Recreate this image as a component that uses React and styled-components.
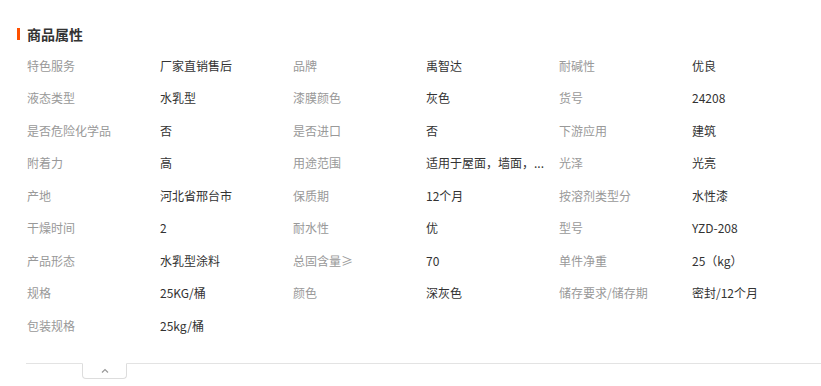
import styled, { createGlobalStyle } from 'styled-components';

const GlobalStyle = createGlobalStyle`
    body {
        margin: 0;
        background: #fff;
        font-family: "Microsoft YaHei", "Noto Sans CJK SC", "Liberation Sans", sans-serif;
    }
`

const Page = styled.div`
    padding: 24px 0 0 17px;
`

const Title = styled.h2`
    display: flex;
    align-items: center;
    margin: 0;
    height: 20px;
    font-size: 14px;
    font-weight: bold;
    color: #333;
    &::before {
        content: '';
        width: 3px;
        height: 12px;
        background: #ff5000;
        margin-right: 7px;
    }
`

const Grid = styled.div`
    display: grid;
    grid-template-columns: repeat(6, 133px);
    grid-auto-rows: 32.5px;
    margin: 4.75px 0 0 10px;
    font-size: 12px;
`

const Cell = styled.div`
    display: flex;
    align-items: center;
    color: ${p => (p.$label ? '#999' : '#333')};
    white-space: nowrap;
`

const Footer = styled.div`
    margin: 22px 0 0 9px;
    border-top: 1px solid #e3e3e3;
    height: 23px;
    padding-left: 56px;
`

const Toggle = styled.button`
    display: flex;
    align-items: center;
    justify-content: center;
    width: 45px;
    height: 16px;
    margin-top: -1px;
    padding: 0 0 2px;
    border: 1px solid #ddd;
    border-top: 1px solid #fff;
    border-radius: 0 0 4px 4px;
    background: #fff;
`

const props = [
    ['特色服务', '厂家直销售后', '品牌', '禹智达', '耐碱性', '优良'],
    ['液态类型', '水乳型', '漆膜颜色', '灰色', '货号', '24208'],
    ['是否危险化学品', '否', '是否进口', '否', '下游应用', '建筑'],
    ['附着力', '高', '用途范围', '适用于屋面，墙面，...', '光泽', '光亮'],
    ['产地', '河北省邢台市', '保质期', '12个月', '按溶剂类型分', '水性漆'],
    ['干燥时间', '2', '耐水性', '优', '型号', 'YZD-208'],
    ['产品形态', '水乳型涂料', '总固含量≥', '70', '单件净重', '25（kg）'],
    ['规格', '25KG/桶', '颜色', '深灰色', '储存要求/储存期', '密封/12个月'],
    ['包装规格', '25kg/桶'],
]

const App = () => (
    <Page>
        <GlobalStyle />
        <Title>商品属性</Title>
        <Grid>
            {props.flat().map((text, i) => (
                <Cell key={i} $label={i % 2 === 0}>{text}</Cell>
            ))}
        </Grid>
        <Footer>
            <Toggle>
                <svg width="8" height="5" viewBox="0 0 8 5">
                    <path d="M1 4.5 L4 1.5 L7 4.5" fill="none" stroke="#999" strokeWidth="1.2" />
                </svg>
            </Toggle>
        </Footer>
    </Page>
);

export default App;
